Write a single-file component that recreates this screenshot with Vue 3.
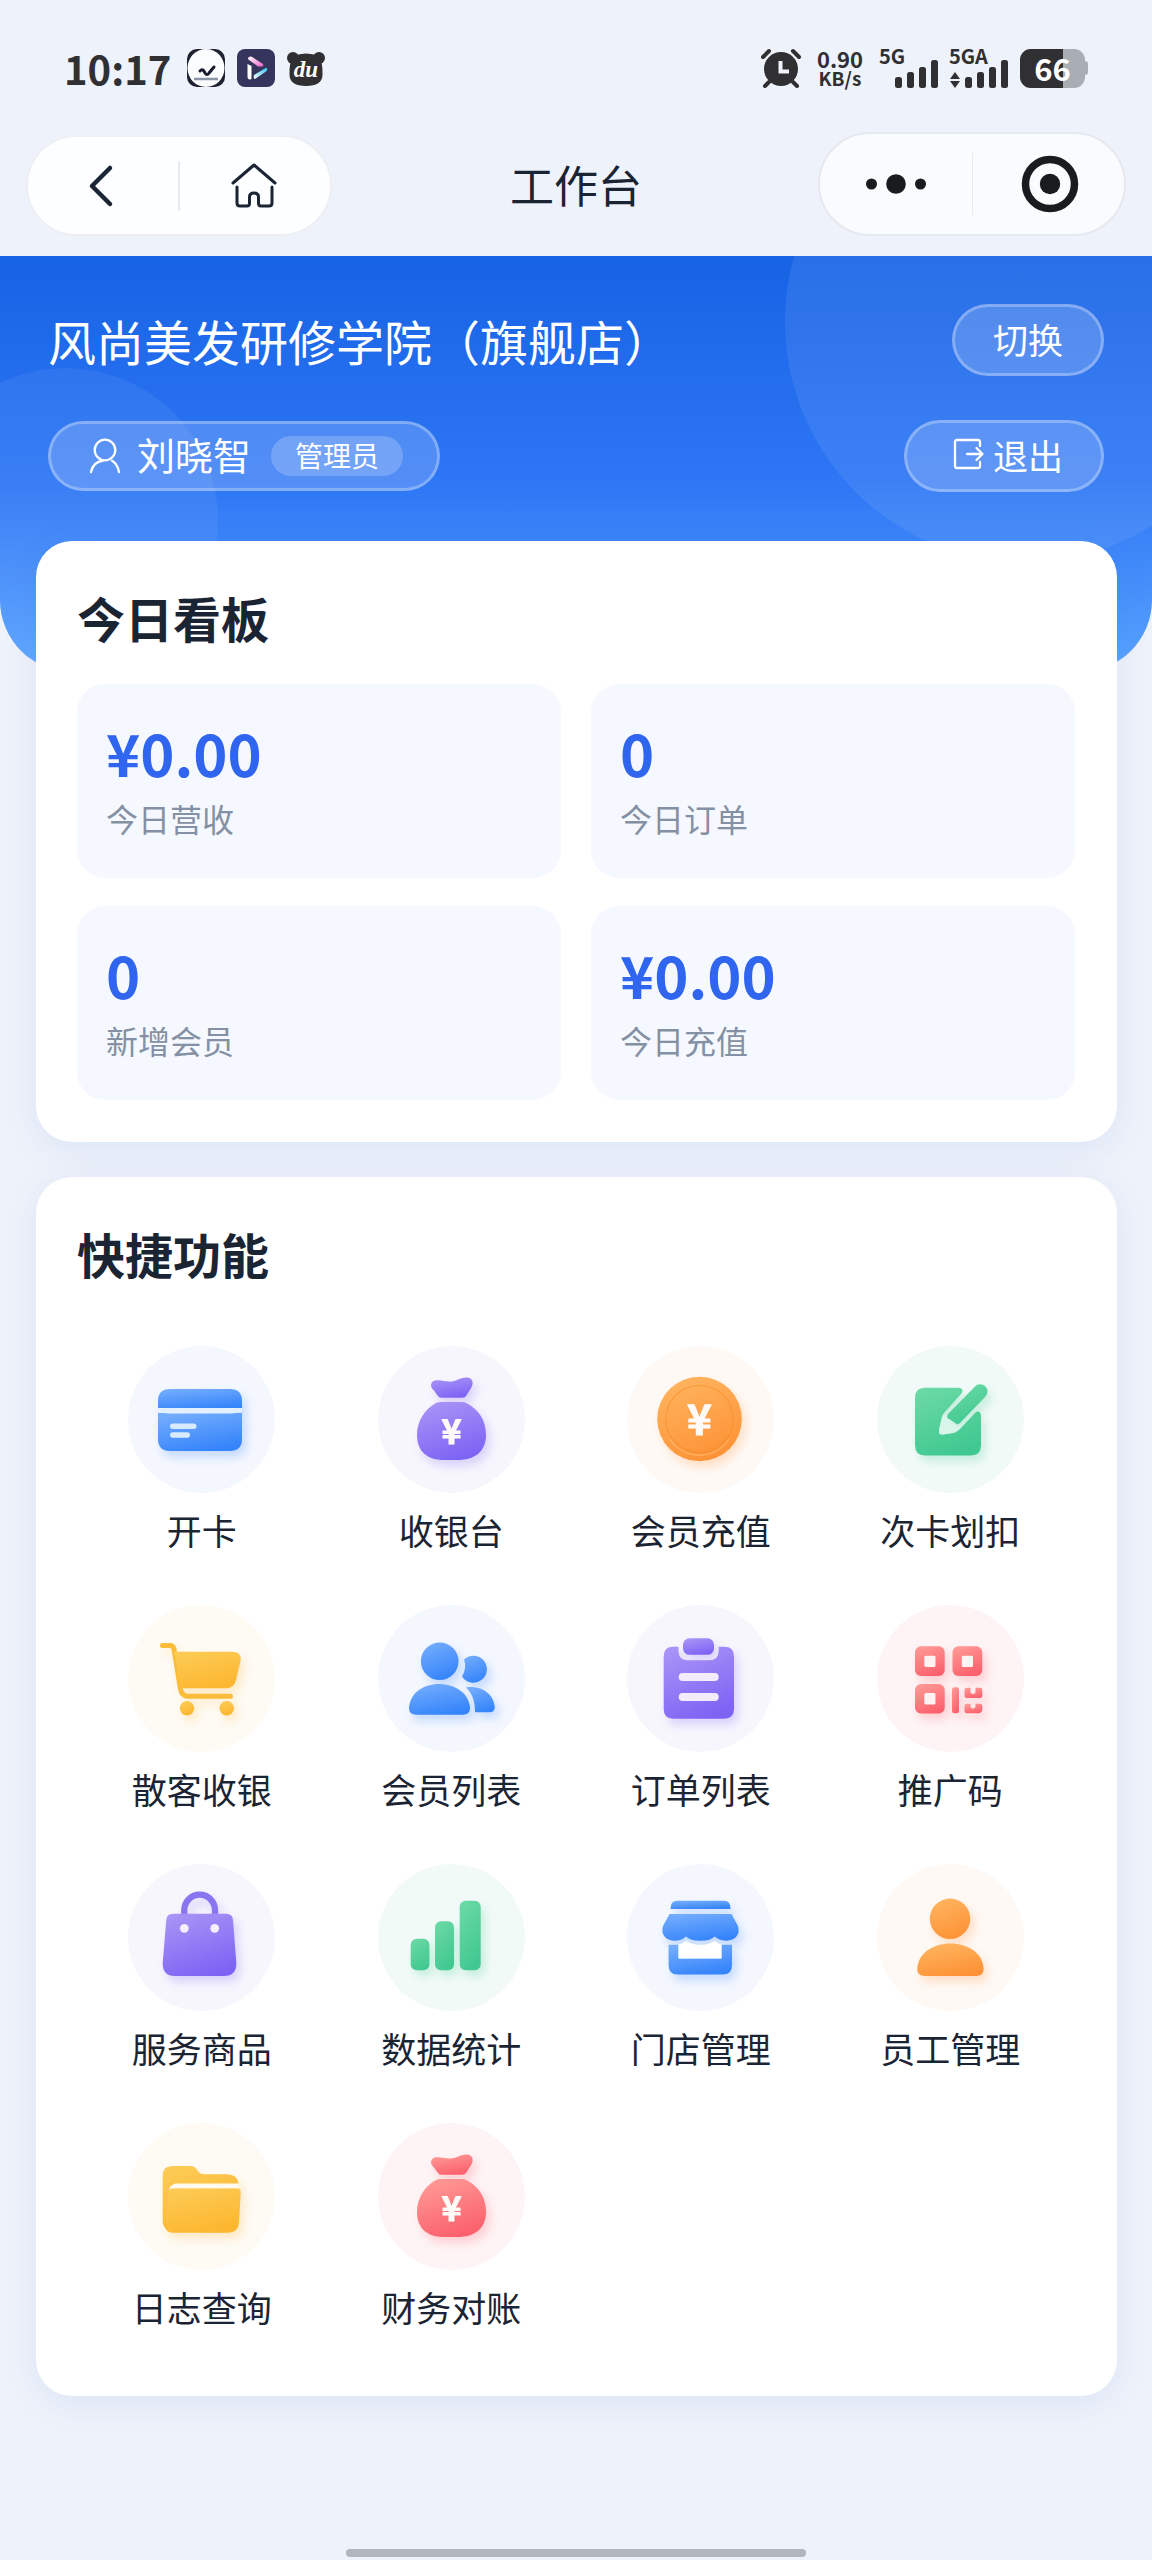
<template>
  <div class="page">
    <!-- shared gradients and icon shapes -->
    <svg class="sprite" aria-hidden="true">
      <defs>
        <linearGradient
          v-for="(stops, name) in gradients"
          :id="`grad-${name}`"
          :key="name"
          x1="0.2"
          y1="0"
          x2="0.6"
          y2="1"
        >
          <stop offset="0" :stop-color="stops[0]" />
          <stop offset="1" :stop-color="stops[1]" />
        </linearGradient>
        <linearGradient id="play-pink" x1="0" y1="0" x2="1" y2="1">
          <stop offset="0" stop-color="#fff" />
          <stop offset="1" stop-color="#ee5fc4" />
        </linearGradient>
        <linearGradient id="play-cyan" x1="0" y1="1" x2="1" y2="0">
          <stop offset="0" stop-color="#fff" />
          <stop offset="1" stop-color="#2cc3ee" />
        </linearGradient>
      </defs>

      <symbol id="icon-card" viewBox="0 0 147 147">
        <path d="M30 63V55Q30 43 42 43H102Q114 43 114 55V63Z" />
        <path d="M30 67H114V93Q114 105 102 105H42Q30 105 30 93Z" />
        <path d="M30 62H114V65Q110 67 104 67.500H40Q34 67 30 65Z" fill="#e2f0ff" />
        <rect x="42" y="77.500" width="26.500" height="5.500" rx="2.700" fill="#d8eaff" />
        <rect x="42" y="86.300" width="20" height="5.500" rx="2.700" fill="#d8eaff" />
      </symbol>

      <symbol id="icon-money" viewBox="0 0 147 147">
        <path d="M53.300 41C52 36 56 33.500 61 34.300C67 35.500 73 36.500 79 34C84 32 90 30 93.500 33.500C96 37 94 41 91.500 44.500L88 50Q87 51.700 84.500 51.700H63Q61 51.700 60 50L56 44.500Q54 42.500 53.300 41Z" />
        <path d="M58 57Q60 56 63 56H84Q87 56 90 58C101 64 108 75 108 89C108 106 96 114 80 114H66C50 114 39 106 39 89C39 75 47 63 58 57Z" />
      </symbol>

      <symbol id="icon-coin" viewBox="0 0 147 147">
        <circle cx="72.500" cy="73" r="42.300" />
        <circle cx="72.500" cy="73" r="33.700" fill="none" stroke="#f58c26" stroke-opacity="0.500" stroke-width="1.300" />
        <path d="M43 93A35 35 0 0 0 102 93" fill="none" stroke="#ffcf8a" stroke-opacity="0.500" stroke-width="1.300" />
      </symbol>

      <symbol id="icon-edit" viewBox="0 0 147 147">
        <path d="M48 41.700H81C86 41.700 86.500 45 84 48L67 67Q65 69 64.500 72L62 84Q61.500 89 66 88.500L76 87Q79 86.500 82 84L98 67C101 64 104 66 104 70V99Q104 109.500 94 109.500H48Q38 109.500 38 99V52Q38 41.700 48 41.700Z" />
        <path d="M68.500 68L65.500 71L62 84Q61.500 89 66 88.500L78 86.500L85 80L79 80Z" fill="#d9f6ea" />
        <path d="M70.500 72Q69.500 69.500 71.500 67.500L98 40.500A7.200 7.200 0 0 1 108.500 50.500L83 77Q81 79 79 77.500Z" />
      </symbol>

      <symbol id="icon-cart" viewBox="0 0 147 147">
        <path
          d="M34.500 40.500H42Q45 40.500 46 44L52.500 84Q54 91.300 60 91.300H102.500"
          fill="none"
          stroke="#fbbc3a"
          stroke-width="5"
          stroke-linecap="round"
          stroke-linejoin="round"
        />
        <path d="M46 46.700H104Q114 46.700 112.500 56L108 75Q106 83.300 98 83.300H53Z" />
        <circle cx="59" cy="103.300" r="7.200" />
        <circle cx="98.700" cy="103.300" r="7.200" />
      </symbol>

      <symbol id="icon-users" viewBox="0 0 147 147">
        <circle cx="61.700" cy="56.300" r="18.800" />
        <path d="M31 103C32 88 45 79 61 79S91 88 92 103Q92 109.700 85 109.700H38Q31 109.700 31 103Z" />
        <path d="M86 54.500A13.500 13.500 0 1 1 84 71.500Q89 63 86 54.500Z" />
        <path d="M88 82.500C104 80 116 90 116.700 102Q117 107.300 111 107.300H97C97 97 95 89 88 82.500Z" />
      </symbol>

      <symbol id="icon-clipboard" viewBox="0 0 147 147">
        <path d="M46 41.700H51.500V46Q51.500 55.300 61 55.300H82Q91.700 55.300 91.700 46V41.700H97.500Q107 41.700 107 51.500V104Q107 113.700 97.500 113.700H46Q36.700 113.700 36.700 104V51.500Q36.700 41.700 46 41.700Z" />
        <rect x="56" y="33.300" width="31" height="16.500" rx="6.500" />
        <rect x="51.700" y="68" width="40" height="8" rx="4" fill="#f1edff" />
        <rect x="51.700" y="88" width="40" height="8" rx="4" fill="#f1edff" />
      </symbol>

      <symbol id="icon-qrcode" viewBox="0 0 147 147">
        <rect x="38" y="41.300" width="29.700" height="29.700" rx="6" />
        <rect x="75.500" y="41.300" width="29.700" height="29.700" rx="6" />
        <rect x="38" y="79" width="29.700" height="29.500" rx="6" />
        <g fill="#fff3f3">
          <rect x="47.300" y="50.700" width="11.200" height="11.400" rx="1.500" />
          <rect x="84.800" y="50.700" width="11.200" height="11.400" rx="1.500" />
          <rect x="47.300" y="88" width="11.200" height="11.400" rx="1.500" />
        </g>
        <rect x="75" y="82.300" width="7" height="26" rx="2.500" />
        <path d="M90 82.700H93.500V87Q93.500 89 96 89T98.500 87V82.700H103Q105.300 82.700 105.300 85V91Q105.300 93 103 93H90Q87.500 93 87.500 90.500V85Q87.500 82.700 90 82.700Z" />
        <path d="M90 98.700H93.500V101Q93.500 103.500 96 103.500T98.500 101V98.700H103Q105.300 98.700 105.300 101V104Q105.300 108.300 101 108.300H90Q87.500 108.300 87.500 106V101Q87.500 98.700 90 98.700Z" />
      </symbol>

      <symbol id="icon-bag" viewBox="0 0 147 147">
        <path d="M56.300 51V46A15.300 15.300 0 0 1 87 46V51" fill="none" stroke="#8a75f0" stroke-width="6.300" />
        <path d="M45 49.700H98Q104.500 49.700 105 56L108.300 99Q108.500 112 96 112H47Q34.500 112 34.700 99L38.300 56Q38.800 49.700 45 49.700Z" />
        <circle cx="56.300" cy="64.300" r="4.400" fill="#f4f0ff" />
        <circle cx="86.700" cy="64.300" r="4.400" fill="#f4f0ff" />
      </symbol>

      <symbol id="icon-chart" viewBox="0 0 147 147">
        <rect x="32.700" y="74.700" width="18.700" height="31.600" rx="6" />
        <rect x="57" y="57.300" width="19" height="49" rx="6" />
        <rect x="81.700" y="36.700" width="21" height="69.600" rx="6" />
      </symbol>

      <symbol id="icon-store" viewBox="0 0 147 147">
        <path d="M50 36.700H97Q103.600 36.700 103.600 45H43.500Q43.500 36.700 50 36.700Z" />
        <path d="M42.500 50H104.500L110.500 61C114 69 109 76.700 100 76.700Q92 76.700 87.600 72.500Q84 76.700 73.500 76.700T59 72.500Q55 76.700 47 76.700C38 76.700 33 69 36.500 61Z" />
        <path d="M41.600 80.800H51.500V94.600H94.500V80.800H105V101Q105 110.600 96 110.600H50.500Q41.600 110.600 41.600 101Z" />
        <path d="M51.500 80.800Q55 80 59 77Q66 81 73.500 81T87.600 77Q91 80 94.500 80.800V94.600H51.500Z" fill="#fff" />
      </symbol>

      <symbol id="icon-staff" viewBox="0 0 147 147">
        <circle cx="73" cy="54.800" r="20.200" />
        <path d="M40.200 105C41 89 56 79.400 73.400 79.400S106 89 106.600 105Q106.600 112 99 112H48Q40.200 112 40.200 105Z" />
      </symbol>

      <symbol id="icon-folder" viewBox="0 0 147 147">
        <path d="M44 43H62Q66 43 68.500 46L71 49.500Q72.500 51.300 76 51.300H99Q110 51.300 110.500 61.600H47Q41 61.600 41 68V108Q34.700 105 34.700 98V53Q34.700 43 44 43Z" />
        <path d="M45 65.300H109Q113 65.300 112.700 70L111 99Q110.500 109.700 100 109.700H45Q38 109.500 37 104L40.700 70Q41 65.300 45 65.300Z" />
        <path d="M43 66Q43 60.500 49 60.500H110.500V65.300H45Q43.500 65.300 43 66Z" fill="#fffaf0" />
      </symbol>
    </svg>

    <div class="status-bar">
      <div class="status-left">
        <span class="clock">10:17</span>
        <svg width="38" height="38" viewBox="0 0 38 38">
          <rect width="38" height="38" rx="10" fill="#1d2130" />
          <ellipse cx="19" cy="19" rx="18.500" ry="19" fill="#fbfcfd" />
          <path d="M13 22Q16 19 18 24Q20 27 22 24L27 18" fill="none" stroke="#171a2c" stroke-width="3" stroke-linecap="round" />
          <path d="M7 30H31" stroke="#8b95a8" stroke-width="2.500" />
        </svg>
        <svg width="38" height="38" viewBox="0 0 38 38">
          <rect width="38" height="38" rx="8" fill="#34345c" />
          <path d="M10.500 15L14.500 17V29Q14.500 31 12.500 30.500T10.500 28Z" fill="#fff" />
          <path d="M12 8Q14 7 16 8.500L26 15Q27 17.500 25 17.500H21L12 11Q10 9.500 12 8Z" fill="url(#play-pink)" />
          <path d="M17 26L29.500 18.500Q31 21 29 22.500L18 30Q16 30 17 26Z" fill="url(#play-cyan)" />
        </svg>
        <svg width="38" height="38" viewBox="0 0 38 38">
          <circle cx="6" cy="9" r="6" fill="#303033" />
          <circle cx="32" cy="9" r="6" fill="#303033" />
          <path d="M6 7Q19 2 32 7Q36 14 35.500 26Q35 37 19 37T2.500 26Q2 14 6 7Z" fill="#303033" />
          <text x="19" y="28" class="du">du</text>
        </svg>
      </div>
      <div class="status-right">
        <svg width="40" height="40" viewBox="0 0 40 40" fill="none" stroke="#303033">
          <circle cx="20" cy="21" r="17" fill="#303033" stroke="none" />
          <path d="M2 9L8 3M38 9L32 3M8 34L4 38M32 34L36 38" stroke-width="4" stroke-linecap="round" />
          <path d="M19.500 13V23.500H28" stroke="#eef2fa" stroke-width="4" />
        </svg>
        <div class="speed">
          <span class="speed-num">0.90</span>
          <span class="speed-unit">KB/s</span>
        </div>
        <div v-for="net in networks" :key="net" class="network">
          <span class="network-name">{{ net }}</span>
          <svg width="60" height="28" viewBox="0 0 60 28" fill="#303033">
            <path v-if="net === '5GA'" d="M6 12L11 19H1ZM6 28L1 21H11Z" />
            <rect x="16" y="17" width="7" height="11" rx="2.500" />
            <rect x="28" y="12" width="7" height="16" rx="2.500" />
            <rect x="40" y="7" width="7" height="21" rx="2.500" />
            <rect x="52" y="0" width="7" height="28" rx="2.500" />
          </svg>
        </div>
        <div class="battery">
          <span class="battery-level" :style="{ width: battery + '%' }" />
          <span class="battery-num">{{ battery }}</span>
        </div>
      </div>
    </div>

    <nav class="nav-bar">
      <div class="capsule capsule-left">
        <button type="button" class="capsule-btn" aria-label="返回">
          <svg width="48" height="48" viewBox="0 0 48 48">
            <path d="M31 6L13 24L31 42" fill="none" stroke="#1b2433" stroke-width="4.500" stroke-linecap="round" stroke-linejoin="round" />
          </svg>
        </button>
        <span class="capsule-line" />
        <button type="button" class="capsule-btn" aria-label="首页">
          <svg width="48" height="48" viewBox="0 0 48 48" fill="none" stroke="#1b2433" stroke-width="3" stroke-linecap="round" stroke-linejoin="round">
            <path d="M2 21L23 3L44 21" />
            <path d="M6 25V41Q6 44 9 44H16Q18.500 44 18.500 41V35Q18.500 31 23 31T27.500 35V41Q27.500 44 30 44H38Q41 44 41 41V25" />
          </svg>
        </button>
      </div>
      <h1 class="nav-title">工作台</h1>
      <div class="capsule capsule-right">
        <button type="button" class="capsule-btn" aria-label="更多">
          <svg width="64" height="64" viewBox="0 0 64 64" fill="#1a1b1c">
            <circle cx="7.500" cy="32" r="5.500" />
            <circle cx="32" cy="32" r="9.800" />
            <circle cx="56.500" cy="32" r="5.500" />
          </svg>
        </button>
        <span class="capsule-line" />
        <button type="button" class="capsule-btn" aria-label="关闭">
          <svg width="64" height="64" viewBox="0 0 64 64">
            <circle cx="34" cy="32" r="24.500" fill="none" stroke="#1a1b1c" stroke-width="7.500" />
            <circle cx="34" cy="32" r="10.200" fill="#1a1b1c" />
          </svg>
        </button>
      </div>
    </nav>

    <header class="hero">
      <div class="hero-row">
        <h2 class="shop-name">风尚美发研修学院（旗舰店）</h2>
        <button type="button" class="ghost-btn">切换</button>
      </div>
      <div class="hero-row">
        <div class="user-chip">
          <svg width="32" height="36" viewBox="0 0 32 36" fill="none" stroke="#fff" stroke-width="2.300" stroke-linecap="round">
            <circle cx="16" cy="12" r="10.300" />
            <path d="M2 34Q4 24 14 22.500M30 34Q28.500 26 23 22.800" />
          </svg>
          <span class="user-name">刘晓智</span>
          <span class="role">管理员</span>
        </div>
        <button type="button" class="ghost-btn with-icon">
          <svg width="32" height="32" viewBox="0 0 32 32" fill="none" stroke="#fff" stroke-width="2.300" stroke-linecap="round" stroke-linejoin="round">
            <path d="M27 8V4Q27 2 25 2H4Q2 2 2 4V28Q2 30 4 30H25Q27 30 27 28V24" />
            <path d="M14 16H29M23.500 10L29.500 16L23.500 22" />
          </svg>
          退出
        </button>
      </div>
    </header>

    <main class="content">
      <section class="card">
        <h3 class="card-title">今日看板</h3>
        <div class="stats">
          <div v-for="item in stats" :key="item.label" class="stat">
            <div class="stat-value">{{ item.value }}</div>
            <div class="stat-label">{{ item.label }}</div>
          </div>
        </div>
      </section>

      <section class="card">
        <h3 class="card-title">快捷功能</h3>
        <div class="shortcuts">
          <button
            v-for="item in shortcuts"
            :key="item.label"
            type="button"
            class="shortcut"
          >
            <span class="shortcut-icon" :class="item.color">
              <svg viewBox="0 0 147 147" :fill="`url(#grad-${item.color})`">
                <use :href="`#icon-${item.icon}`" />
                <text v-if="item.icon === 'money'" x="73.500" y="98" class="yen">¥</text>
                <text v-if="item.icon === 'coin'" x="72.500" y="89" class="yen yen-large">¥</text>
              </svg>
            </span>
            <span class="shortcut-label">{{ item.label }}</span>
          </button>
        </div>
      </section>
    </main>

    <div class="home-indicator" />
  </div>
</template>

<script setup>
import { ref } from "vue";

const battery = ref(66);
const networks = ["5G", "5GA"];

// [top, bottom] colors of every icon theme
const gradients = {
  blue: ["#74adfd", "#3584fb"],
  purple: ["#a894f6", "#7d63f4"],
  orange: ["#ffb560", "#fd9236"],
  green: ["#6bd9a6", "#40c890"],
  yellow: ["#fccb55", "#fdb62f"],
  red: ["#ff9a96", "#fb606c"],
};

const stats = ref([
  { label: "今日营收", value: "¥0.00" },
  { label: "今日订单", value: "0" },
  { label: "新增会员", value: "0" },
  { label: "今日充值", value: "¥0.00" },
]);

const shortcuts = [
  { label: "开卡", icon: "card", color: "blue" },
  { label: "收银台", icon: "money", color: "purple" },
  { label: "会员充值", icon: "coin", color: "orange" },
  { label: "次卡划扣", icon: "edit", color: "green" },
  { label: "散客收银", icon: "cart", color: "yellow" },
  { label: "会员列表", icon: "users", color: "blue" },
  { label: "订单列表", icon: "clipboard", color: "purple" },
  { label: "推广码", icon: "qrcode", color: "red" },
  { label: "服务商品", icon: "bag", color: "purple" },
  { label: "数据统计", icon: "chart", color: "green" },
  { label: "门店管理", icon: "store", color: "blue" },
  { label: "员工管理", icon: "staff", color: "orange" },
  { label: "日志查询", icon: "folder", color: "yellow" },
  { label: "财务对账", icon: "money", color: "red" },
];
</script>

<style>
body {
  margin: 0;
  background: #eef2fa;
}
</style>

<style scoped>
.page {
  display: flex;
  flex-direction: column;
  min-height: 100vh;
  box-sizing: border-box;
  font-family: "Noto Sans CJK SC", "Noto Sans", sans-serif;
  color: #1b2433;
}

.page button {
  padding: 0;
  border: none;
  background: none;
  font-family: inherit;
  color: inherit;
  cursor: pointer;
}

.page svg {
  display: block;
  flex-shrink: 0;
}

.page .sprite {
  position: absolute;
  width: 0;
  height: 0;
}

.yen {
  font-family: "Noto Sans CJK SC", sans-serif;
  font-size: 34px;
  font-weight: 700;
  text-anchor: middle;
  fill: #fffaf8;
  stroke: #fffaf8;
  stroke-width: 1;
  stroke-linejoin: round;
}

.yen-large {
  font-size: 42px;
}

.du {
  font-family: "Liberation Serif", serif;
  font-size: 23px;
  font-style: italic;
  font-weight: 700;
  text-anchor: middle;
  fill: #fff;
}

/* status bar */
.status-bar {
  display: flex;
  justify-content: space-between;
  align-items: center;
  height: 40px;
  padding: 48px 64px 44px;
  color: #303033;
}

.status-left,
.status-right {
  display: flex;
  align-items: center;
  gap: 12px;
}

.status-right {
  gap: 16px;
}

.clock {
  margin-right: 4px;
  font-size: 40px;
  font-weight: 700;
  line-height: 40px;
}

.speed {
  display: flex;
  flex-direction: column;
  align-items: center;
  font-weight: 700;
}

.speed-num {
  font-size: 22px;
  line-height: 20px;
}

.speed-unit {
  font-size: 19px;
  line-height: 20px;
}

.network {
  position: relative;
  display: flex;
  align-items: flex-end;
  height: 40px;
}

.network + .network {
  margin-left: -6px;
}

.network-name {
  position: absolute;
  top: 0;
  left: 0;
  font-size: 20px;
  font-weight: 700;
  line-height: 16px;
}

.battery {
  position: relative;
  width: 65px;
  height: 39px;
  margin: 0 3px 0 -5px;
  border-radius: 11px;
  background: #a9adb4;
}

.battery::after {
  position: absolute;
  top: 12px;
  right: -3px;
  width: 3px;
  height: 14px;
  border-radius: 0 3px 3px 0;
  background: #a9adb4;
  content: "";
}

.battery-level {
  display: block;
  height: 100%;
  border-radius: 11px 0 0 11px;
  background: #303033;
}

.battery-num {
  position: absolute;
  inset: 0;
  color: #fff;
  font-size: 31px;
  font-weight: 700;
  line-height: 38px;
  text-align: center;
}

/* nav bar */
.nav-bar {
  display: grid;
  grid-template-columns: 1fr auto 1fr;
  align-items: end;
  padding: 0 26px 20px;
}

.nav-title {
  margin: 0;
  padding-bottom: 4px;
  font-size: 44px;
  font-weight: 400;
  line-height: 96px;
}

.capsule {
  display: flex;
  align-items: center;
  box-sizing: border-box;
  border: 2px solid #edeff2;
  border-radius: 52px;
}

.capsule-left {
  width: 306px;
  height: 101px;
  background: #fdfeff;
}

.capsule-right {
  justify-self: end;
  width: 308px;
  height: 104px;
  border-color: #e6e9ef;
  background: #f9fbfe;
}

.page .capsule-btn {
  display: flex;
  flex: 1;
  align-items: center;
  justify-content: center;
  height: 100%;
}

.capsule-line {
  width: 2px;
  height: 50px;
  background: #e9eaec;
}

.capsule-right .capsule-line {
  width: 1px;
  height: 62px;
}

/* blue header */
.hero {
  position: relative;
  display: flex;
  flex-direction: column;
  gap: 44px;
  padding: 48px 48px 180px;
  border-radius: 0 0 72px 72px;
  background: linear-gradient(180deg, #1763e5 0%, #2d76f5 54%, #5aa4ff 100%);
  color: #fff;
  overflow: hidden;
}

.hero::before,
.hero::after {
  position: absolute;
  border-radius: 50%;
  content: "";
}

.hero::before {
  top: -174px;
  right: -113px;
  width: 480px;
  height: 480px;
  background: rgba(255, 255, 255, 0.08);
}

.hero::after {
  top: 112px;
  left: -86px;
  width: 304px;
  height: 304px;
  background: rgba(255, 255, 255, 0.06);
}

.hero-row {
  position: relative;
  z-index: 1;
  display: flex;
  align-items: center;
  justify-content: space-between;
}

.shop-name {
  margin: 0;
  font-size: 48px;
  font-weight: 400;
  line-height: 72px;
}

.page .ghost-btn {
  display: flex;
  align-items: center;
  gap: 8px;
  height: 72px;
  padding: 0 38px 4px;
  border: 3px solid rgba(255, 255, 255, 0.28);
  border-radius: 36px;
  background: rgba(255, 255, 255, 0.18);
  font-size: 35px;
}

.page .with-icon {
  padding-left: 46px;
}

.user-chip {
  display: flex;
  align-items: center;
  box-sizing: border-box;
  height: 70px;
  padding: 0 34px 0 38px;
  border: 3px solid rgba(255, 255, 255, 0.28);
  border-radius: 35px;
  background: rgba(255, 255, 255, 0.18);
}

.user-name {
  margin: 0 20px 0 16px;
  padding-bottom: 4px;
  font-size: 38px;
  line-height: 52px;
}

.role {
  padding: 0 24px 2px;
  border-radius: 20px;
  background: rgba(255, 255, 255, 0.2);
  font-size: 28px;
  line-height: 38px;
}

/* cards */
.content {
  position: relative;
  z-index: 1;
  display: flex;
  flex-direction: column;
  gap: 35px;
  margin-top: -131px;
  padding: 0 35px 0 36px;
}

.card {
  padding: 44px 42px 42px 41px;
  border-radius: 36px;
  background: #fff;
  box-shadow: 0 8px 36px rgba(40, 100, 200, 0.09);
}

.card-title {
  margin: 0 0 35px;
  font-size: 48px;
  font-weight: 700;
  line-height: 64px;
}

.stats {
  display: grid;
  grid-template-columns: 1fr 1fr;
  gap: 28px 30px;
}

.stat {
  padding: 34px 29px 38px;
  border-radius: 28px;
  background: #f5f8fe;
}

.stat-value {
  color: #2f65ef;
  font-size: 58px;
  font-weight: 700;
  line-height: 68px;
}

.stat-label {
  margin-top: 10px;
  color: #8490a3;
  font-size: 32px;
  line-height: 44px;
}

.shortcuts {
  display: grid;
  grid-template-columns: repeat(4, 1fr);
  gap: 50px 0;
  padding: 26px 0 22px;
}

.page .shortcut {
  display: flex;
  flex-direction: column;
  align-items: center;
  gap: 12px;
}

.shortcut-icon {
  width: 147px;
  height: 147px;
  border-radius: 50%;
}

.shortcut-icon svg {
  width: 147px;
  height: 147px;
}

.shortcut-icon.blue {
  background: #f4f7fe;
}

.shortcut-icon.purple {
  background: #f7f6fd;
}

.shortcut-icon.orange {
  background: #fef9f5;
}

.shortcut-icon.green {
  background: #f2faf8;
}

.shortcut-icon.yellow {
  background: #fefbf5;
}

.shortcut-icon.red {
  background: #fef4f5;
}

.blue svg {
  filter: drop-shadow(4px 6px 5px rgba(51, 129, 251, 0.24));
}

.purple svg {
  filter: drop-shadow(4px 6px 5px rgba(123, 95, 243, 0.24));
}

.orange svg {
  filter: drop-shadow(4px 6px 5px rgba(253, 143, 50, 0.24));
}

.green svg {
  filter: drop-shadow(4px 6px 5px rgba(60, 199, 140, 0.24));
}

.yellow svg {
  filter: drop-shadow(4px 6px 5px rgba(253, 181, 44, 0.24));
}

.red svg {
  filter: drop-shadow(4px 6px 5px rgba(251, 92, 105, 0.24));
}

.shortcut-label {
  font-size: 35px;
  line-height: 50px;
}

.home-indicator {
  width: 40%;
  height: 8px;
  margin: auto auto 3px;
  border-radius: 4px;
  background: #b2b6bf;
}
</style>
